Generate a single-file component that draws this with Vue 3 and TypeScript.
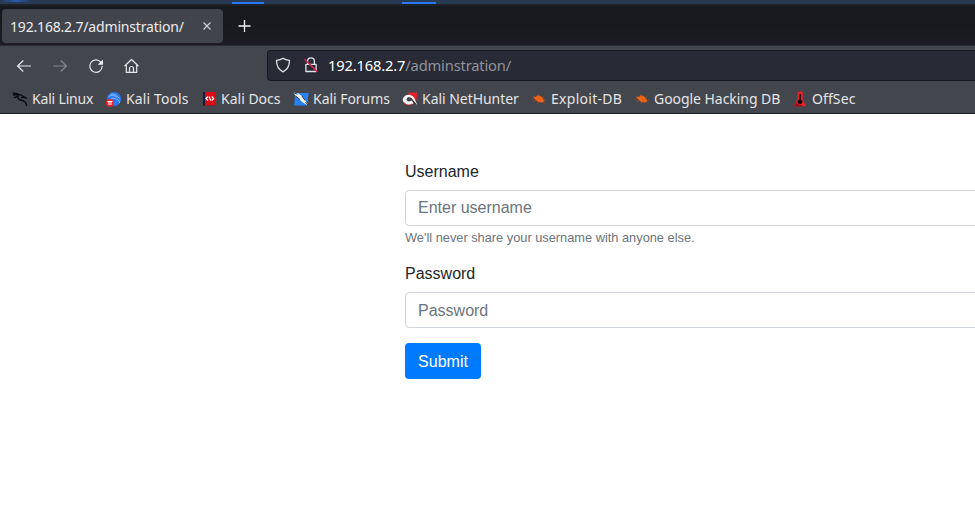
<script setup lang="ts">
interface Bookmark {
  label: string
  icon: string
  width: number
  tracking: number
}

const bookmarks: Bookmark[] = [
  { label: 'Kali Linux', icon: 'dragon', width: 62, tracking: -0.18 },
  { label: 'Kali Tools', icon: 'tools', width: 63, tracking: 0.12 },
  { label: 'Kali Docs', icon: 'docs', width: 60, tracking: 0 },
  { label: 'Kali Forums', icon: 'forums', width: 77, tracking: -0.04 },
  { label: 'Kali NetHunter', icon: 'nethunter', width: 97, tracking: -0.04 },
  { label: 'Exploit-DB', icon: 'bug', width: 71, tracking: 0.28 },
  { label: 'Google Hacking DB', icon: 'bug', width: 126, tracking: -0.05 },
  { label: 'OffSec', icon: 'offsec', width: 44, tracking: 0.1 },
]
</script>

<template>
  <div class="window">
    <div class="panel">
      <span class="glow"></span>
      <span class="mark first"></span>
      <span class="mark second"></span>
    </div>
    <div class="tabs">
      <div class="tab">
        <span class="tab-title">192.168.2.7/adminstration/</span>
        <svg class="close" width="10" height="10" viewBox="0 0 10 10"><path d="M1.5 1.500l7 7M8.500 1.500l-7 7" /></svg>
      </div>
      <svg class="plus" width="14" height="14" viewBox="0 0 14 14"><path d="M6.500 1v12M.5 7h12" /></svg>
    </div>
    <div class="toolbar">
      <div class="nav">
        <svg width="16" height="16" viewBox="0 0 16 16"><path d="M14.500 8H1.500M7 2.800L1.600 8 7 13.200" /></svg>
        <svg class="dim" width="16" height="16" viewBox="0 0 16 16"><path d="M1.500 8h13M9 2.800L14.400 8 9 13.200" /></svg>
        <svg width="16" height="16" viewBox="0 0 16 16"><path d="M12.900 4.300A6.200 6.200 0 1 0 14.200 8.300" /><path class="solid" d="M15 1.500v5.300H9.700z" /></svg>
        <svg width="16" height="16" viewBox="0 0 16 16"><path d="M.9 7.800L7.500 1.500 14.100 7.800M2.300 7v7.400h10.400V7M5.500 14.100v-3.600a2 2 0 0 1 4 0v3.600" /></svg>
      </div>
      <div class="address">
        <svg class="shield" width="16" height="16" viewBox="0 0 16 16"><path d="M8 1.200c2 1.500 4 1.900 6.500 2.100 0 5.800-1.500 9.200-6.500 11.500C3 12.500 1.500 9.100 1.500 3.300 4 3.100 6 2.700 8 1.200z" /></svg>
        <svg class="lock" width="16" height="16" viewBox="0 0 16 16"><path d="M4.600 7V4.200a3.400 3.400 0 0 1 6.800 0V7M2.900 7.300h10.200v7.200H2.900z" /><path class="slash" d="M1.500 2.200l12.800 12.500" /></svg>
        <span class="url"><b>192.168.2.7</b>/adminstration/</span>
      </div>
    </div>
    <div class="bookmarks">
      <div v-for="item in bookmarks" :key="item.label" class="bookmark">
        <svg width="16" height="16" viewBox="0 0 16 16">
          <g v-if="item.icon === 'dragon'" fill="none" stroke="#08090b">
            <path d="M.5 1.800l5 1 2.500 1.400M1 4l5-.5M2 6.800l4-2" stroke-width="1.300" />
            <path d="M4 3.200c3-.3 5 .2 7.500 2.300l3.500 2M6.200 4.200c-1.200 3.200.8 4.500 3 4.900 3.400.6 5.300 2.200 5.400 6M9 7c2-1.200 4-.8 5.500.3" stroke-width="1.400" />
          </g>
          <g v-else-if="item.icon === 'tools'">
            <circle cx="8" cy="8" r="7.100" fill="#2877f1" />
            <path d="M2.500 5.500c4-2 7-.5 8.500 1M5 8c3-2 5 .5 6.500.8 1.500.4 2 1.700 2 3.200M5 3.200c3-.5 5 .5 7 3.200l2 1" fill="none" stroke="#8fc0fb" />
            <circle cx="3.900" cy="11.800" r="3.900" fill="#e62129" />
            <path d="M1.500 10.500h5M3 10.500V14M5 10.500V14" fill="none" stroke="#fff" />
          </g>
          <g v-else-if="item.icon === 'docs'">
            <path d="M2 1h12v14H2z" fill="#d90c16" />
            <path d="M2 1h2v14H2z" fill="#111e3b" />
            <path d="M3 14h11v1H3z" fill="#84202b" />
            <path d="M7 5.500L5 7.500l2 2M10.700 5.500l2 2-2 2M8.100 5.500l1.500 4" fill="none" stroke="#fff" stroke-width="1.200" />
          </g>
          <g v-else-if="item.icon === 'forums'">
            <path d="M2 2h13.700l-1.700 12.500H1.300z" fill="#2680f6" />
            <path d="M.5 1.500L5 2.300l4.500 3.200 3 4 3 5-5-2.500-4-3.500-4-3.500z" fill="#f5f6f7" />
            <path d="M.5 1.500l4 1.800M2.500 5L7 8.500M9 5l3 4.500M12.500 11l2.500 3" fill="none" stroke="#283448" />
          </g>
          <g v-else-if="item.icon === 'nethunter'">
            <path d="M5.500 1.500h10L14 11z" fill="#e6202b" />
            <path d="M.8 8C2.500 2.500 9 2.500 12 6.500l3.200 7.200-4.200-3C8.500 6.500 5.500 6 4.500 8.300c0 2.400 2.700 2.700 5 1.200l2.200 2.400C7 16 .2 13.500.8 8z" fill="#f7f4f5" />
            <path d="M5.300 7.500c2-1.500 4-.2 5.200 1.800l3 3.500" fill="none" stroke="#3b252c" stroke-width="1.300" />
            <path d="M1.500 10.800C3 14 7 15 9.500 13" fill="none" stroke="#b91b27" />
          </g>
          <g v-else-if="item.icon === 'bug'">
            <path d="M2 5.500l3 .2 1.500-1.500 3 .8 3 3 .8 2.500-2.500 1-3.500-.5-2.800-2.300L3 7z" fill="#ef6211" />
            <path d="M3.500 7.500L1 8.500M5 9.500l-2.500 1.200M8 10.500l-1 2.200M8 5.500L7.500 3.300M11 7l2-1.500M12.500 9.500l2.500-.5M12 10.500l2 2" stroke="#96502d" stroke-width=".8" />
          </g>
          <g v-else>
            <path d="M5.300.5h5.400v8l3.500 6.700H1.800l3.500-6.700z" fill="#e32129" />
            <path d="M7.200 3h1.600v5.500l1.800 1.900L9.200 13H6.800l-1.400-2.600 1.800-1.900z" fill="#130608" />
            <path d="M2 15.200l2.600-4 1.300 2 4.200 1.100.9.900z" fill="#9c1118" />
          </g>
        </svg>
        <span :style="{ width: item.width + 'px', letterSpacing: item.tracking + 'px' }">{{ item.label }}</span>
      </div>
    </div>
    <form class="form" @submit.prevent>
      <label for="username">Username</label>
      <input id="username" type="text" placeholder="Enter username" />
      <small>We'll never share your username with anyone else.</small>
      <label for="password">Password</label>
      <input id="password" type="password" placeholder="Password" />
      <button type="submit">Submit</button>
    </form>
  </div>
</template>

<style>
html, body { margin: 0; overflow: hidden; background: #fff; }
</style>

<style scoped>
* { box-sizing: border-box; }
svg { display: block; flex: none; }
.window { width: 975px; height: 517px; overflow: hidden; background: #fff; font-family: "Noto Sans", sans-serif; }
.panel { display: flex; height: 4px; background: #273a53; }
.glow { width: 32px; height: 2px; background: linear-gradient(90deg, #273a53, #2858aa, #273a53); }
.mark { width: 32px; height: 2px; margin-top: 2px; background: #2777ff; }
.first { margin-left: 200px; }
.second { width: 34px; margin-left: 138px; }
.tabs { display: flex; align-items: center; height: 42px; padding: 2px 0 0 2px; border-bottom: 1px solid #2c2d32; background: linear-gradient(#22262a, #16181b 3px, #1c1c22); }
.tab { display: flex; align-items: center; justify-content: space-between; width: 221px; height: 34px; padding: 0 11px 0 8px; border-radius: 4px; background: #42444c; color: #ececee; font-size: 14px; }
.tab-title { padding-top: 1px; letter-spacing: -0.18px; }
.close, .plus { fill: none; stroke: #d5d5d8; stroke-width: 1.1; }
.plus { margin-left: 15px; stroke: #f4f4f4; stroke-width: 1.3; }
.toolbar { display: flex; height: 39px; padding-top: 4px; background: #44464d; }
.nav { display: flex; align-items: center; gap: 20px; width: 267px; height: 31px; padding-left: 16px; }
.nav svg { fill: none; stroke: #e6e6e8; stroke-width: 1.2; stroke-linecap: round; stroke-linejoin: round; }
.nav .dim { stroke: #85868c; }
.nav .solid { fill: #eeeeef; stroke: none; }
.address { display: flex; align-items: center; flex: 1; height: 31px; padding: 0 0 1px 7px; border: 1px solid #171820; border-right: 0; border-radius: 4px 0 0 4px; background: #282a36; }
.address svg { fill: none; stroke: #e1e1e5; stroke-width: 1.3; stroke-linejoin: round; }
.address .lock { margin-left: 12px; }
.address .slash { stroke: #df244e; stroke-width: 1.5; }
.url { margin: -1px 0 0 9px; color: #92939b; font-size: 14.7px; letter-spacing: -0.16px; white-space: nowrap; }
.url b { color: #fff; font-weight: 400; }
.bookmarks { display: flex; align-items: center; gap: 12px; height: 29px; padding-left: 12px; border-bottom: 1px solid #1b1c20; background: #44464d; }
.bookmark { display: flex; align-items: center; gap: 4px; color: #e4e4e6; font-size: 14px; line-height: 20px; white-space: nowrap; }
.form { display: flex; flex-direction: column; align-items: flex-start; width: 620px; margin-left: 405px; padding-top: 46px; color: #212529; font-family: "Liberation Sans", Arial, sans-serif; font-size: 16px; }
label { height: 24px; margin-bottom: 6px; line-height: 24px; }
input { width: 100%; height: 36px; padding: 0 12px; border: 1px solid #ced4da; border-radius: 4px; background: #fff; color: #495057; font: inherit; }
label:first-child { margin-bottom: 5.5px; line-height: 23px; }
#password { padding-top: 1px; }
input::placeholder { color: #6c757d; opacity: 1; }
small { height: 20px; margin: 2.5px 0 14px; color: #6c757d; font-size: 12.8px; line-height: 20px; }
button { width: 76px; height: 36px; margin-top: 15px; padding: 1px 0 0; border: 0; border-radius: 4px; background: #007bff; color: #fff; font: inherit; }
</style>
